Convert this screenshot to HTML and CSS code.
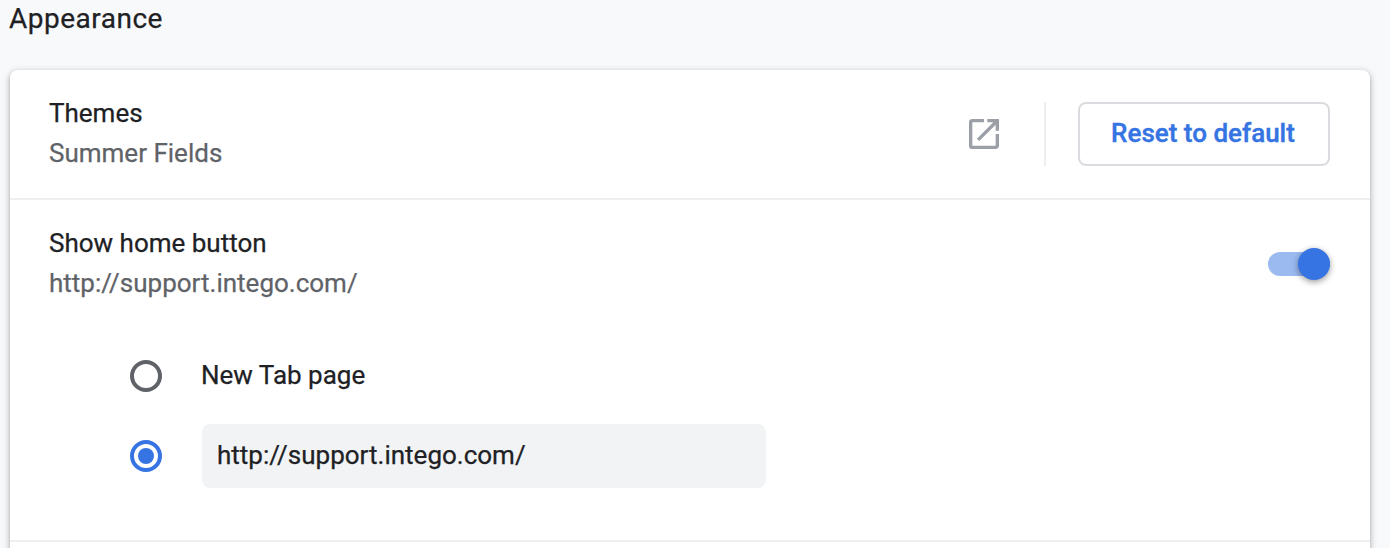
FILE: index.html
```
<!DOCTYPE html>
<html lang="en">
<head>
    <meta charset="utf-8">
    <meta name="viewport" content="width=device-width, initial-scale=1.0">
    <title>Settings - Appearance</title>
    <link rel="stylesheet" href="styles.css">
</head>
<body>
    <h2 class="section-title">Appearance</h2>

    <div class="card">
        <!-- Themes -->
        <div class="row">
            <div class="label">
                <div>Themes</div>
                <div class="secondary">Summer Fields</div>
            </div>
            <a class="open-link" href="#" aria-label="Open themes">
                <svg class="open-icon" viewBox="0 0 24 24">
                    <path d="M19 19H5V5h7V3H5a2 2 0 0 0-2 2v14a2 2 0 0 0 2 2h14c1.100 0 2-.9 2-2v-7h-2v7zM14 3v2h3.590l-9.830 9.830 1.410 1.410L19 6.410V10h2V3h-7z"/>
                </svg>
            </a>
            <div class="separator"></div>
            <button class="reset-button">Reset to default</button>
        </div>

        <!-- Home button -->
        <div class="row line">
            <div class="label">
                <div>Show home button</div>
                <div class="secondary">http://support.intego.com/</div>
            </div>
            <div class="toggle" role="switch" aria-checked="true">
                <div class="knob"></div>
            </div>
        </div>

        <div class="options">
            <div class="option">
                <span class="radio"></span>
                <span class="option-label">New Tab page</span>
            </div>
            <div class="option">
                <span class="radio checked"></span>
                <input class="url-input" type="text" value="http://support.intego.com/">
            </div>
        </div>
    </div>
</body>
</html>
```

FILE: styles.css
```
* {
    box-sizing: border-box;
}

body {
    margin: 0;
    height: 548px;
    background-color: #f8f9fb;
    color: #202124;
    font-family: Roboto, "Liberation Sans", sans-serif;
    font-size: 26px;
    line-height: 40px;
    -webkit-text-stroke: 0.25px;
}

.section-title {
    margin: 0 0 32px 9px;
    height: 38px;
    line-height: 38px;
    font-size: 28px;
    font-weight: 400;
    letter-spacing: 0.5px;
}

.card {
    width: 1360px;
    height: 478px;
    margin-left: 10px;
    background-color: #fff;
    border-radius: 8px 8px 0 0;
    box-shadow: 0 2px 4px rgba(60, 64, 67, 0.3), 0 2px 6px 2px rgba(60, 64, 67, 0.15);
}

.row {
    display: flex;
    align-items: center;
    height: 128px;
    padding: 0 40px 0 39px;
}

.line {
    height: 130px;
    border-top: 2px solid #eee;
}

.label {
    flex: 1;
    padding-bottom: 2px;
}

.secondary {
    color: #5f6368;
}

/* Themes row */
.open-link {
    width: 40px;
    height: 40px;
}

.open-icon {
    display: block;
    fill: #9aa0a6;
}

.separator {
    width: 2px;
    height: 64px;
    margin: 0 32px 0 40px;
    background-color: #eee;
}

.reset-button {
    width: 252px;
    height: 64px;
    padding: 0 2px 2px 0;
    border: 2px solid #dadce0;
    border-radius: 8px;
    background-color: #fff;
    color: #3574e2;
    font-family: inherit;
    font-size: 26px;
    font-weight: 500;
    -webkit-text-stroke: 0.4px;
}

/* Toggle */
.toggle {
    display: flex;
    align-items: center;
    justify-content: flex-end;
    width: 62px;
    height: 24px;
    border-radius: 12px;
    background-color: #9abaf0;
}

.knob {
    flex: none;
    width: 32px;
    height: 32px;
    border-radius: 50%;
    background-color: #3574e2;
    box-shadow: 0 2px 6px rgba(0, 0, 0, 0.4);
}

/* Radio options */
.options {
    height: 214px;
    padding: 8px 0 0 120px;
    border-bottom: 2px solid #eee;
}

.option {
    display: flex;
    align-items: center;
    height: 80px;
}

.option-label {
    padding-bottom: 2px;
    margin-left: 39px;
}

.radio {
    display: flex;
    align-items: center;
    justify-content: center;
    width: 32px;
    height: 32px;
    border: 4px solid #5f6368;
    border-radius: 50%;
}

.checked {
    border-color: #3574e2;
}

.checked::before {
    content: "";
    width: 16px;
    height: 16px;
    border-radius: 50%;
    background-color: #3574e2;
}

.url-input {
    width: 564px;
    height: 64px;
    margin-left: 40px;
    padding: 0 15px 2px;
    border: none;
    border-radius: 8px;
    background-color: #f1f3f4;
    color: #202124;
    font-family: inherit;
    font-size: 26px;
    -webkit-text-stroke: 0.25px;
}
```
